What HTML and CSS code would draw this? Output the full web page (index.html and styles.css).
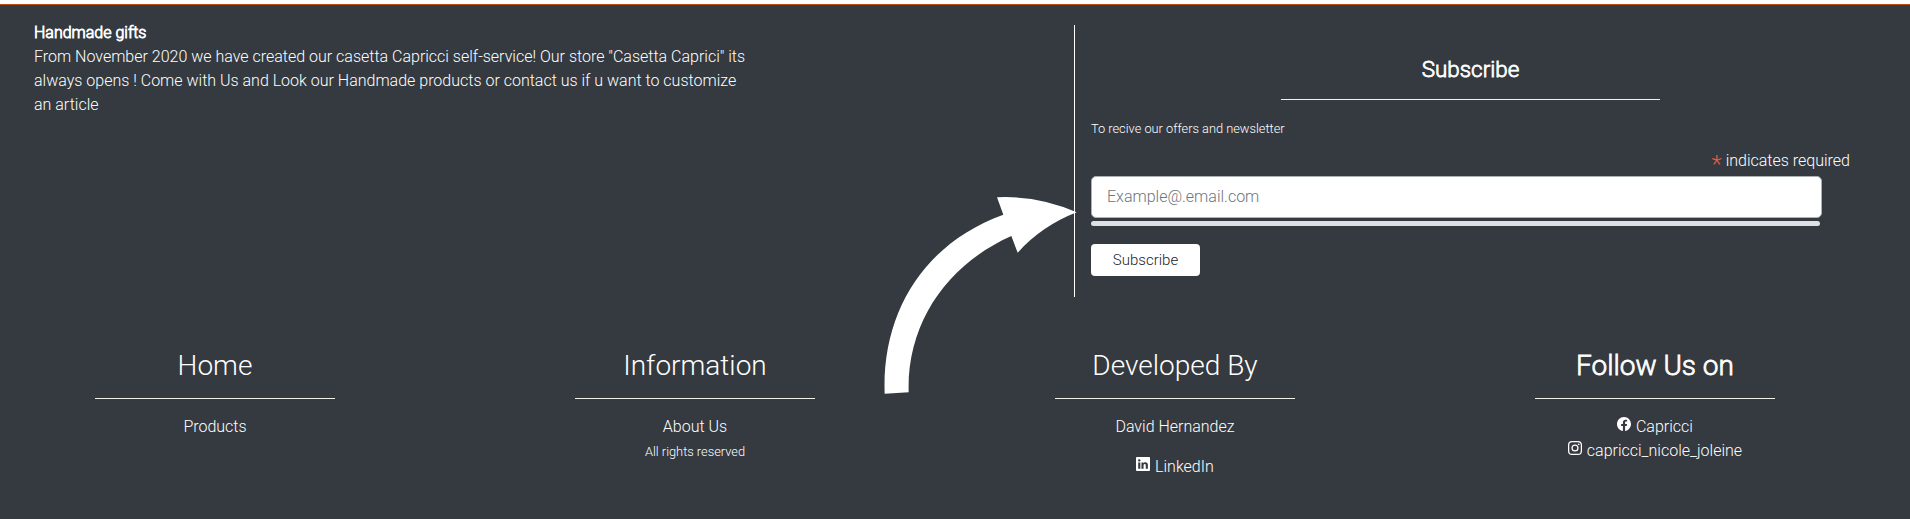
FILE: index.html
```html
<!DOCTYPE html>
<html lang="en">
<head>
<meta charset="utf-8">
<title>Capricci</title>
<link rel="stylesheet" href="styles.css">
</head>
<body>
<footer class="footer">
  <div class="top">
    <section class="about">
      <p><b class="strong">Handmade gifts</b><br>From November 2020 we have created our casetta Capricci self-service! Our store "Casetta Caprici" its always opens ! Come with Us and Look our Handmade products or contact us if u want to customize an article</p>
    </section>
    <section class="subscribe">
      <h2 class="subscribe-title strong">Subscribe</h2>
      <hr class="rule">
      <small class="small note">To recive our offers and newsletter</small>
      <div class="required"><span class="asterisk">*</span> indicates required</div>
      <input class="email" type="email" placeholder="Example@.email.com">
      <div class="bar"></div>
      <button class="button">Subscribe</button>
    </section>
  </div>
  <div class="links">
    <section class="col">
      <h3 class="col-title">Home</h3>
      <hr class="rule">
      <div>Products</div>
    </section>
    <section class="col">
      <h3 class="col-title">Information</h3>
      <hr class="rule">
      <div>About Us</div>
      <div class="small rights">All rights reserved</div>
    </section>
    <section class="col">
      <h3 class="col-title">Developed By</h3>
      <hr class="rule">
      <div>David Hernandez</div>
      <div class="linkedin"><svg class="icon" viewBox="0 0 16 16"><path fill-rule="evenodd" d="M0 1.146C0 .513.526 0 1.175 0h13.650C15.474 0 16 .513 16 1.146v13.708c0 .633-.526 1.146-1.175 1.146H1.175C.526 16 0 15.487 0 14.854V1.146zm4.943 12.248V6.169H2.542v7.225h2.401zm-1.200-8.212c.837 0 1.358-.554 1.358-1.248-.015-.709-.520-1.248-1.342-1.248-.822 0-1.359.540-1.359 1.248 0 .694.521 1.248 1.327 1.248h.016zm4.908 8.212V9.359c0-.216.016-.432.080-.586.173-.431.568-.878 1.232-.878.869 0 1.216.662 1.216 1.634v3.865h2.401V9.250c0-2.220-1.184-3.252-2.764-3.252-1.274 0-1.845.700-2.165 1.193v.025h-.016l.016-.025V6.169h-2.400c.030.678 0 7.225 0 7.225h2.400z"/></svg> LinkedIn</div>
    </section>
    <section class="col">
      <h3 class="col-title strong">Follow Us on</h3>
      <hr class="rule">
      <div><svg class="icon" viewBox="0 0 16 16"><path d="M16 8.049c0-4.446-3.582-8.050-8-8.050C3.580 0-.002 3.603-.002 8.050c0 4.017 2.926 7.347 6.750 7.951v-5.625h-2.030V8.050H6.750V6.275c0-2.017 1.195-3.131 3.022-3.131.876 0 1.791.157 1.791.157v1.980h-1.009c-.993 0-1.303.621-1.303 1.258v1.510h2.218l-.354 2.326H9.250V16c3.824-.604 6.750-3.934 6.750-7.951z"/></svg> Capricci</div>
      <div><svg class="icon" viewBox="0 0 16 16"><path fill-rule="evenodd" d="M4.700 0h6.600A4.700 4.700 0 0 1 16 4.700v6.600A4.700 4.700 0 0 1 11.300 16H4.700A4.700 4.700 0 0 1 0 11.300V4.700A4.700 4.700 0 0 1 4.700 0zm0 1.440A3.260 3.260 0 0 0 1.440 4.700v6.600a3.260 3.260 0 0 0 3.260 3.260h6.600a3.260 3.260 0 0 0 3.260-3.260V4.700a3.260 3.260 0 0 0-3.260-3.260zM8 3.890a4.110 4.110 0 1 1 0 8.220 4.110 4.110 0 0 1 0-8.220zm0 1.440a2.670 2.670 0 1 0 0 5.340 2.670 2.670 0 0 0 0-5.340zM12.270 2.770a.960.960 0 1 1 0 1.920.960.960 0 0 1 0-1.920z"/></svg> capricci_nicole_joleine</div>
    </section>
  </div>
  <svg class="arrow" viewBox="0 0 720 690"><path d="M74 641C65 400 190 190 430 104L411 52Q535 46 650 97Q545 138 473 218L454 168C270 250 140 420 146 637Z"/></svg>
</footer>
</body>
</html>
```
FILE: styles.css
```css
* { box-sizing: border-box; }
body {
  margin: 0;
  padding-top: 4px;
  background: #fff;
  color: #fff;
  font: 300 16px/24px Roboto, sans-serif;
}
p, h2, h3 { margin: 0; font-weight: 300; }
.footer {
  position: relative;
  height: 515px;
  border-top: 1px solid #b84a14;
  background: #343a40;
  overflow: hidden;
}
.strong { font-weight: 300; -webkit-text-stroke: 0.8px #fff; }
.small { font-size: 12.8px; }
.rule {
  width: 50%;
  height: 1px;
  margin: 16px auto;
  border: 0;
  background: #f0f0ea;
}
.top { display: flex; justify-content: space-between; padding: 16px 60px 0 34px; }
.about { width: 720px; }
.subscribe {
  width: 776px;
  height: 272px;
  margin-top: 4px;
  padding: 30px 0 0 16px;
  border-left: 1px solid #fff;
}
.subscribe-title { font-size: 22.4px; line-height: 28px; text-align: center; }
.subscribe .rule { margin-bottom: 17px; }
.note { display: block; }
.required { margin-top: 8px; text-align: right; }
.asterisk { color: #e85c41; font-size: 24px; line-height: 0; vertical-align: -6px; }
.email {
  display: block;
  width: 731px;
  height: 42px;
  margin-top: 3px;
  padding: 0 15px 2px;
  border: 1px solid #abb0b2;
  border-radius: 5px;
  background: #fff;
  font: 300 16px Roboto, sans-serif;
}
.email::placeholder { color: #6c757d; opacity: 1; }
.bar { width: 729px; height: 5px; margin-top: 3px; border-radius: 3px; background: #dee0e2; }
.button {
  display: block;
  width: 109px;
  height: 32px;
  margin-top: 18px;
  padding: 0;
  border: 0;
  border-radius: 4px;
  background: #fff;
  color: #212529;
  font: 300 15px Roboto, sans-serif;
}
.links {
  display: grid;
  grid-template-columns: repeat(4, 480px);
  margin: 52px 0 0 -25px;
  text-align: center;
}
.col-title { font-size: 28px; line-height: 34px; }
.links .rule { margin-top: 15px; }
.rights { padding-top: 1px; }
.linkedin { margin-top: 16px; }
.icon { width: 14px; height: 14px; margin-right: 1px; fill: #fff; vertical-align: 1px; }
.arrow { position: absolute; left: 860px; top: 175px; width: 240px; height: 230px; fill: #fff; }
```
